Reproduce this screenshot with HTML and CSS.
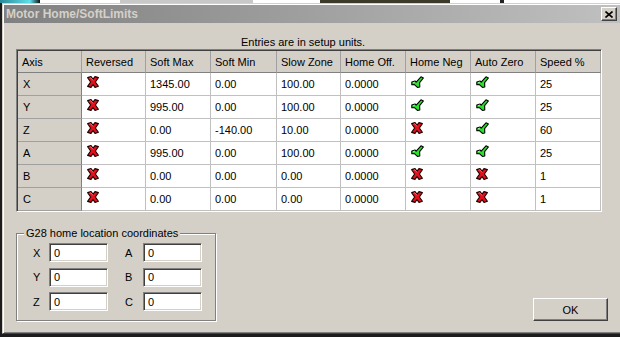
FILE: index.html
```html
<!DOCTYPE html>
<html lang="en">
<head>
    <meta charset="UTF-8">
    <title>Motor Home/SoftLimits</title>
    <link rel="stylesheet" href="styles.css">
</head>
<body>
    <div class="desktop-strip"></div>
    <div class="window">
        <div class="titlebar">
            <span class="title">Motor Home/SoftLimits</span>
            <button class="close-btn">
                <svg width="8" height="7" viewBox="0 0 8 7"><path d="M0.5 0.5 L7.5 6.5 M7.5 0.5 L0.5 6.5" stroke="#000" stroke-width="1.6"/></svg>
            </button>
        </div>
        <div class="content">
            <div class="caption">Entries are in setup units.</div>
            <div class="grid" id="grid"></div>

            <div class="bottom-row">
                <div class="groupbox">
                    <span class="groupbox-title">G28 home location coordinates</span>
                    <div class="coords">
                        <label>X</label><input type="text" value="0">
                        <span></span>
                        <label>A</label><input type="text" value="0">
                        <label>Y</label><input type="text" value="0">
                        <span></span>
                        <label>B</label><input type="text" value="0">
                        <label>Z</label><input type="text" value="0">
                        <span></span>
                        <label>C</label><input type="text" value="0">
                    </div>
                </div>
                <button class="ok-btn">OK</button>
            </div>
        </div>
    </div>

    <script>
        const headers = ['Axis', 'Reversed', 'Soft Max', 'Soft Min', 'Slow Zone', 'Home Off.', 'Home Neg', 'Auto Zero', 'Speed %'];
        // x = red cross, v = green tick
        const rows = [
            ['X', 'x', '1345.00', '0.00', '100.00', '0.0000', 'v', 'v', '25'],
            ['Y', 'x', '995.00', '0.00', '100.00', '0.0000', 'v', 'v', '25'],
            ['Z', 'x', '0.00', '-140.00', '10.00', '0.0000', 'x', 'v', '60'],
            ['A', 'x', '995.00', '0.00', '100.00', '0.0000', 'v', 'v', '25'],
            ['B', 'x', '0.00', '0.00', '0.00', '0.0000', 'x', 'x', '1'],
            ['C', 'x', '0.00', '0.00', '0.00', '0.0000', 'x', 'x', '1']
        ];

        const crossIcon = '<svg class="icon" width="12" height="12" viewBox="0 0 12 12"><path d="M0.6 1.6 L4 0.6 L6 3.2 L8 0.6 L11.4 1.6 L8.4 6 L11.4 10.2 L8 11.4 L6 8.6 L4 11.4 L0.6 10.4 L3.6 6 Z" fill="#e2101a" stroke="#1a0000" stroke-width="1.1" stroke-linejoin="round"/><path d="M2.5 2.2 L4 1.8 L6 4.4" fill="none" stroke="#ff7070" stroke-width="0.9"/></svg>';
        const tickIcon = '<svg class="icon" width="13" height="12" viewBox="0 0 13 12"><path d="M0.8 6 L4 5 L5.2 6.2 L10 0.8 L12.4 2 L8.6 6.6 L8.8 11 L6.4 11.4 L3.4 8.6 L0.8 8.8 Z" fill="#2ee02e" stroke="#000" stroke-width="1.1" stroke-linejoin="round"/><path d="M2 6.6 L4 6.1" stroke="#a0ffa0" stroke-width="0.8"/></svg>';

        const grid = document.getElementById('grid');

        headers.forEach(h => {
            const cell = document.createElement('div');
            cell.className = 'cell head';
            cell.textContent = h;
            grid.appendChild(cell);
        });

        rows.forEach(row => {
            row.forEach((val, i) => {
                const cell = document.createElement('div');
                if (i === 0) {
                    cell.className = 'cell rowhead';
                    cell.textContent = val;
                } else if (val === 'x' || val === 'v') {
                    cell.className = 'cell icon-cell';
                    cell.innerHTML = val === 'x' ? crossIcon : tickIcon;
                } else {
                    cell.className = 'cell';
                    cell.textContent = val;
                }
                grid.appendChild(cell);
            });
        });
    </script>
</body>
</html>
```

FILE: styles.css
```css
body {
    margin: 0;
    background: #1c1c1c;
    font-family: "Liberation Sans", Arial, sans-serif;
    font-size: 11px;
    color: #000;
    overflow: hidden;
}

.desktop-strip {
    height: 3px;
    background: linear-gradient(to right,
        #2a8a96 0, #5ee0ea 30px, #111 40px, #fff 40px,
        #fff 120px, #c8c8c8 120px, #c8c8c8 253px, #fff 253px,
        #fff 320px, #3c3a2a 320px, #3c3a2a 450px, #fff 450px,
        #fff 500px, #222 500px, #222 504px, #fff 504px, #fff 100%);
}

.window {
    margin-left: 2px;
    height: 331px;
    box-sizing: border-box;
    background: #d4d0c8;
    border-top: 1px solid #d4d0c8;
    border-left: 1px solid #d4d0c8;
    border-bottom: 1px solid #404040;
    box-shadow: inset 1px 1px #fff, inset 0 -1px #808080;
    padding: 1px 0 0 1px;
}

.titlebar {
    height: 18px;
    display: flex;
    align-items: center;
    justify-content: space-between;
    background: linear-gradient(to right, #808080, #c0c0c0);
    padding-left: 2px;
}

.title {
    color: #d4d0c8;
    font-weight: bold;
    font-size: 12px;
}

.close-btn {
    width: 16px;
    height: 14px;
    margin-right: 3px;
    padding: 0;
    display: flex;
    align-items: center;
    justify-content: center;
    background: #d4d0c8;
    border: 1px solid;
    border-color: #fff #404040 #404040 #fff;
    box-shadow: inset -1px -1px #808080;
}

.content {
    padding: 13px 0 0 12px;
}

.caption {
    width: 574px;
    height: 13px;
    line-height: 13px;
    text-align: center;
}

.grid {
    width: 583px;
    display: grid;
    grid-template-columns: 64px 64px 65px 66px 64px 65px 65px 65px 65px;
    grid-auto-rows: 23px;
    grid-template-rows: 22px;
    background: #fff;
    border: 1px solid;
    border-color: #808080 #fff #fff #808080;
    box-shadow: inset 1px 1px #404040;
    padding: 1px 0 0 1px;
}

.cell {
    display: flex;
    align-items: center;
    padding-left: 4px;
    border-right: 1px solid #c0c0c0;
    border-bottom: 1px solid #c0c0c0;
    white-space: nowrap;
    overflow: hidden;
}

.head {
    background: #d4d0c8;
    border-right-color: #a0a0a0;
    border-bottom-color: #808080;
}

.rowhead {
    background: #d4d0c8;
    padding-left: 5px;
    border-right-color: #808080;
    border-bottom-color: #a0a0a0;
}

.icon-cell {
    align-items: flex-start;
    padding-left: 5px;
}

.icon {
    margin-top: 3px;
}

.bottom-row {
    width: 592px;
    margin-top: 21px;
    display: flex;
    justify-content: space-between;
    align-items: flex-end;
}

.groupbox {
    position: relative;
    width: 200px;
    height: 88px;
    border: 1px solid #808080;
    box-shadow: inset 1px 1px #fff, 1px 1px #fff;
    padding: 9px 0 0 16px;
    box-sizing: border-box;
}

.groupbox-title {
    position: absolute;
    top: -7px;
    left: 7px;
    padding: 0 2px;
    background: #d4d0c8;
    line-height: 13px;
}

.coords {
    display: grid;
    grid-template-columns: 16px 59px 17px 18px 59px;
    grid-auto-rows: 19px;
    row-gap: 5.5px;
    align-items: center;
}

.coords input {
    width: 59px;
    height: 19px;
    box-sizing: border-box;
    margin: 0;
    padding: 0 0 0 4px;
    font: 11px "Liberation Sans", Arial, sans-serif;
    background: #fff;
    border: 1px solid;
    border-color: #808080 #fff #fff #808080;
    box-shadow: inset 1px 1px #404040, inset -1px -1px #d4d0c8;
    outline: none;
}

.ok-btn {
    width: 75px;
    height: 23px;
    padding: 0;
    font: 11px "Liberation Sans", Arial, sans-serif;
    background: #d4d0c8;
    border: 1px solid;
    border-color: #fff #404040 #404040 #fff;
    box-shadow: inset -1px -1px #808080;
}
```
